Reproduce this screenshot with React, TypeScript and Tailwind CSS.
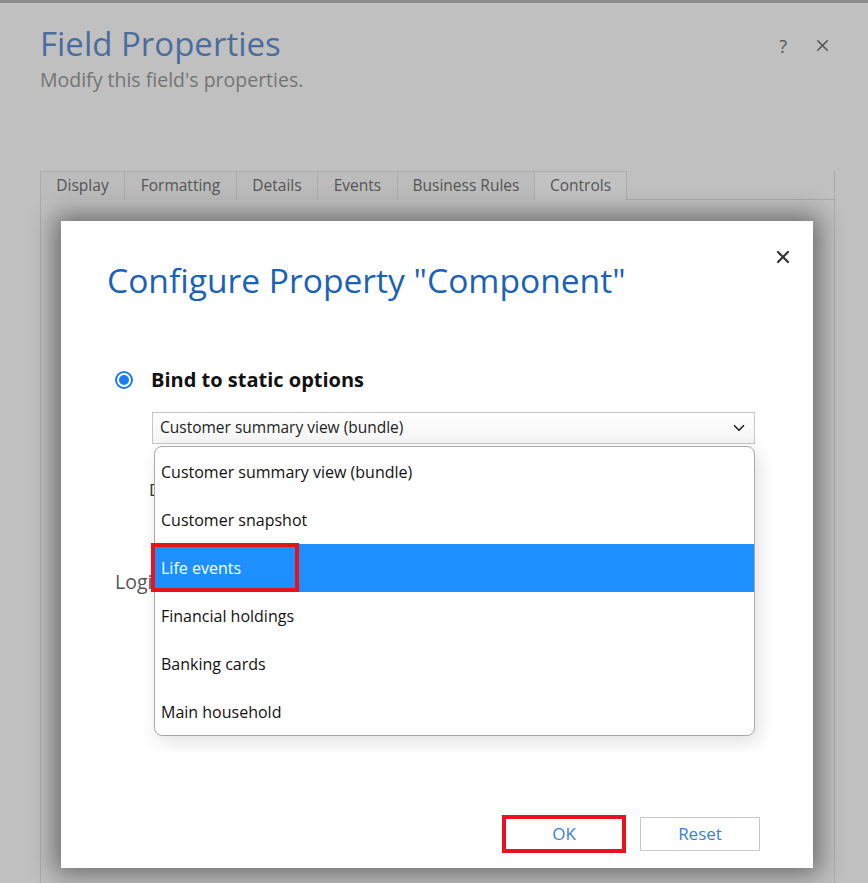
import { ChevronDown, X } from "lucide-react";

const options = [
  "Customer summary view (bundle)",
  "Customer snapshot",
  "Life events",
  "Financial holdings",
  "Banking cards",
  "Main household",
];

const tabs = [
  { label: "Display", w: "w-[85px]" },
  { label: "Formatting", w: "w-[113px]" },
  { label: "Details", w: "w-[82px]" },
  { label: "Events", w: "w-[81px]" },
  { label: "Business Rules", w: "w-[138px]" },
  { label: "Controls", w: "w-[93px]", active: true },
];

export default function App() {
  return (
    <div className="relative w-[868px] h-[883px] overflow-hidden bg-[#c0c0c0] font-['Open_Sans',sans-serif]">
      <div className="flex flex-col h-full border-t-[3px] border-[#8c8c8c]">
        {/* page header */}
        <div className="flex items-start justify-between pl-[40px] pr-[36px] pt-[18px]">
          <div>
            <h1 className="text-[33px] leading-[46px] text-[#4b6d9c]">Field Properties</h1>
            <p className="text-[19.5px] leading-[26px] text-[#747474]">Modify this field's properties.</p>
          </div>
          <div className="flex items-center gap-[26px] mt-[15px] text-[#555]">
            <span className="text-[18px] leading-none">?</span>
            <X size={19} strokeWidth={2} />
          </div>
        </div>

        {/* tabs */}
        <div className="flex mt-[78px] pl-[40px]">
          {tabs.map((t) => (
            <div
              key={t.label}
              className={`${t.w} h-[29px] flex items-center justify-center border border-b-0 border-[#acacac] -ml-px first:ml-0 text-[15.5px] text-[#555] ${
                t.active ? "bg-[#c2c2c2]" : "bg-[#bcbcbc]"
              }`}
            >
              {t.label}
            </div>
          ))}
          <div className="flex-1 mr-[33px] border-b border-r border-[#acacac]" />
        </div>
        <div className="flex-1 ml-[40px] mr-[33px] border-l border-r border-[#acacac]" />
      </div>

      {/* modal */}
      <div className="absolute left-[61px] top-[221px] w-[752px] h-[647px] bg-white shadow-[0_0_24px_6px_rgba(0,0,0,0.45)]">
        <button className="absolute right-[20px] top-[26px] text-[#333]">
          <X size={20} strokeWidth={2.6} />
        </button>

        <div className="pl-[46px] pt-[35px]">
          <h2 className="text-[33.6px] leading-[48px] text-[#1a62b8]">Configure Property "Component"</h2>

          <div className="flex items-center mt-[62px] ml-[8px]">
            <span className="w-[18px] h-[18px] rounded-full border-2 border-[#1a7cf0] flex items-center justify-center">
              <span className="w-[10px] h-[10px] rounded-full bg-[#1a7cf0]" />
            </span>
            <span className="ml-[18px] text-[20px] leading-[28px] font-bold text-[#111]">Bind to static options</span>
          </div>

          <div className="ml-[45px] mt-[18px] w-[603px] h-[32px] border border-[#c6c6c6] flex items-center justify-between pl-[7px] pr-[6px] bg-gradient-to-b from-white to-[#f4f4f4]">
            <span className="text-[15.5px] text-[#222]">Customer summary view (bundle)</span>
            <ChevronDown size={18} strokeWidth={2.2} className="text-[#222]" />
          </div>

          <div className="ml-[42px] mt-[33px] text-[17px] text-[#333]">Default value</div>
          <div className="ml-[8px] mt-[64px] text-[19.5px] text-[#555]">Logic</div>
        </div>

        {/* dropdown list */}
        <div className="absolute left-[93px] top-[225px] w-[601px] h-[290px] bg-white border border-[#a8a8a8] rounded-[8px] shadow-[4px_6px_18px_rgba(0,0,0,0.12)] py-px overflow-hidden">
          {options.map((o, i) => (
            <div
              key={o}
              className={`h-[48px] flex items-center pl-[6px] text-[16px] ${
                i === 2 ? "bg-[#1e8ffe] text-white" : "text-[#111]"
              }`}
            >
              {o}
            </div>
          ))}
        </div>
        <div className="absolute left-[90px] top-[322px] w-[148px] h-[49px] border-[4px] border-[#e8121e]" />

        {/* buttons */}
        <div className="absolute left-[443px] top-[596px] flex gap-[16px]">
          <div className="relative">
            <button className="w-[120px] h-[34px] border border-[#c8c8c8] text-[17px] text-[#3a7fd5]">OK</button>
            <div className="absolute -left-[2px] -top-[2px] w-[124px] h-[38px] border-[4px] border-[#e8121e]" />
          </div>
          <button className="w-[120px] h-[34px] border border-[#c8c8c8] text-[17px] text-[#3a7fd5]">Reset</button>
        </div>
      </div>
    </div>
  );
}
